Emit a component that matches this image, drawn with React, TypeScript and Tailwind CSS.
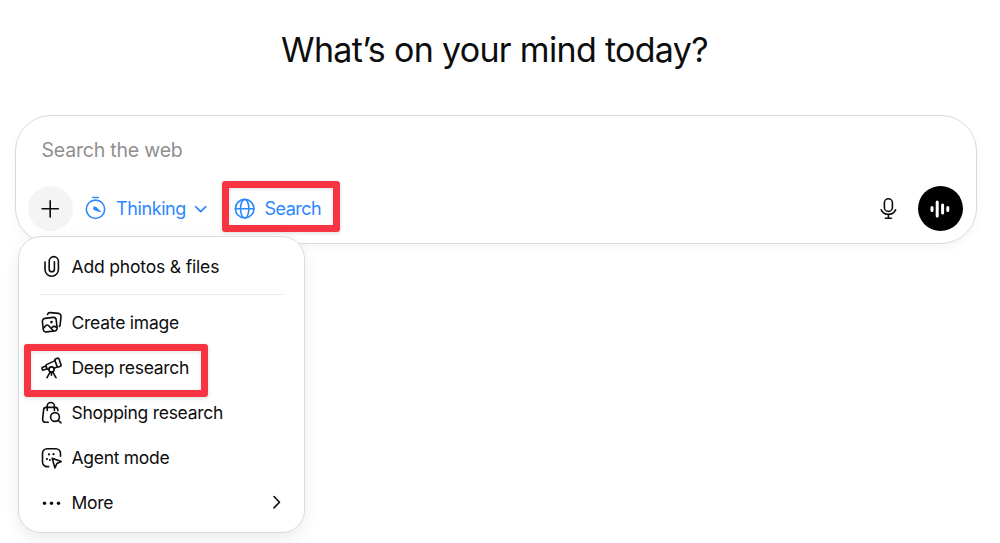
import { ReactNode } from 'react'

interface IconProps {
  children: ReactNode
  className?: string
}

function Icon({ children, className = '' }: IconProps) {
  return (
    <svg
      viewBox="0 0 24 24"
      width="24"
      height="24"
      fill="none"
      stroke="currentColor"
      strokeWidth="1.6"
      strokeLinecap="round"
      strokeLinejoin="round"
      className={`shrink-0 overflow-visible ${className}`}
    >
      {children}
    </svg>
  )
}

interface MenuItemProps {
  icon: ReactNode
  label: string
  labelClass: string
  submenu?: boolean
  highlighted?: boolean
}

function Highlight({ className }: { className: string }) {
  return (
    <span
      className={`pointer-events-none absolute rounded-[3px] border-7 border-[#f73442] shadow-[0_1px_4px_rgba(0,0,0,0.14),inset_0_1px_4px_rgba(0,0,0,0.12)] ${className}`}
    />
  )
}

function MenuItem({ icon, label, labelClass, submenu, highlighted }: MenuItemProps) {
  return (
    <button className="relative flex h-[45px] w-full items-center pr-4 pl-5 text-left">
      <Icon className="mb-[2px] ml-px">{icon}</Icon>
      <span className={`ml-2 flex-1 text-[17.5px] whitespace-nowrap ${labelClass}`}>{label}</span>
      {submenu && (
        <Icon className="mb-[3px]">
          <path d="M10 6.500l5.500 5.700-5.500 5.700" />
        </Icon>
      )}
      {highlighted && <Highlight className="top-[-2px] left-[5px] h-[53px] w-[184px]" />}
    </button>
  )
}

function AttachMenu() {
  return (
    <div className="absolute top-[120px] left-[2px] w-[287px] rounded-[23px] border border-[#dcdcdc] bg-white pt-2 pb-[6px] shadow-[0_6px_16px_rgba(0,0,0,0.08)]">
      <MenuItem
        label="Add photos & files"
        labelClass="tracking-[-0.17px]"
        icon={
          <path d="M5 7v7.500a6.700 6.700 0 0 0 13.400 0V6.200a4.600 4.600 0 0 0-9.200 0v8a2.600 2.600 0 0 0 5.200 0V6.800" />
        }
      />
      <div className="mx-5 mt-[4px] mb-[6px] h-px bg-[#ececec]" />
      <MenuItem
        label="Create image"
        labelClass="tracking-[-0.23px]"
        icon={
          <>
            <path d="M4.900 7.400l8.200-1a2.800 2.800 0 0 1 3.100 2.400l.9 8.100a2.800 2.800 0 0 1-2.500 3.100l-8.200.9a2.800 2.800 0 0 1-3.100-2.400L2.400 10.500a2.800 2.800 0 0 1 2.500-3.100z" />
            <path d="M7.500 3.500a2.700 2.700 0 0 1 2.800-1.900l8.200.8a2.800 2.800 0 0 1 2.500 3.100l-.8 8a3 3 0 0 1-.9 2" />
            <path d="M3.500 17.200l2.400-2.700a1.700 1.700 0 0 1 2.500 0l5 5.300M12.200 16.300c1-1.300 2.800-1.300 4.200.1" />
            <circle cx="11.500" cy="11.100" r="1.300" fill="currentColor" stroke="none" />
          </>
        }
      />
      <MenuItem
        label="Deep research"
        labelClass="tracking-[-0.28px]"
        highlighted
        icon={
          <>
            <path d="M15.400 3.100l2.200-.9a1 1 0 0 1 1.300.6l2.200 6.100a1 1 0 0 1-.6 1.300l-2.100.8a1 1 0 0 1-1.300-.6l-2.300-6a1 1 0 0 1 .6-1.300z" />
            <path d="M15 4.600L6.500 8.600a1 1 0 0 0-.5 1.300l1 2.700a1 1 0 0 0 1.300.6l1-.3M14 12.200l3.200-1.200M6 9.900l-3.400 1.400a1 1 0 0 0-.6 1.300l.3.900a1 1 0 0 0 1.300.6l3.400-1.400" />
            <circle cx="11.500" cy="13.500" r="2.600" />
            <path d="M10.300 15.900l-3.300 5.800M12.700 15.900l3.300 5.800M11.500 16.200v3" />
          </>
        }
      />
      <MenuItem
        label="Shopping research"
        labelClass="tracking-[-0.28px]"
        icon={
          <>
            <path d="M8.300 21.300H5.400a2.800 2.800 0 0 1-2.800-3.100l1-9.400A2.600 2.600 0 0 1 6.200 6.400h9A2.600 2.600 0 0 1 17.800 8.700l.1.900" />
            <path d="M7.200 9.400V5.100a3.600 3.600 0 0 1 7.200 0v4.300" />
            <circle cx="15" cy="16" r="4.400" />
            <path d="M18.200 19.300l2.800 2.500" />
          </>
        }
      />
      <MenuItem
        label="Agent mode"
        labelClass="tracking-[-0.28px]"
        icon={
          <>
            <path d="M8.700 20.600H7.300a4.600 4.600 0 0 1-4.800-4.600V7.300A4.600 4.600 0 0 1 7.100 2.700h8.800A4.600 4.600 0 0 1 20.500 7.300v3" />
            <path d="M12.200 12.200l9 3.300-4.300 2-2 4.400z" />
            <g fill="currentColor" stroke="none">
              <circle cx="9" cy="8.400" r="1.100" />
              <circle cx="13.500" cy="8.200" r="1.100" />
              <circle cx="7" cy="13" r="1.100" />
              <circle cx="9.900" cy="14" r="1" />
            </g>
          </>
        }
      />
      <MenuItem
        label="More"
        labelClass="tracking-[-0.25px]"
        submenu
        icon={
          <g fill="currentColor" stroke="none">
            <circle cx="4.500" cy="12.300" r="1.700" />
            <circle cx="11.500" cy="12.300" r="1.700" />
            <circle cx="18.500" cy="12.300" r="1.700" />
          </g>
        }
      />
    </div>
  )
}

function Composer() {
  return (
    <div className="relative mx-auto h-[129px] w-[962px] rounded-[36px] border border-[#dadada] bg-white shadow-[0_4px_10px_rgba(0,0,0,0.04)]">
      <div className="flex h-[70px] items-center pl-[26px] text-[19.5px] text-[#8f8f8f]">
        <span className="tracking-[-0.2px] whitespace-nowrap">Search the web</span>
      </div>
      <div className="flex h-[45px] items-center pr-[13px] pl-3">
        <button className="flex size-[45px] items-center justify-center rounded-full bg-[#f4f4f4]">
          <Icon>
            <path d="M12.200 3.700v16.200M4.100 11.800h16.200" />
          </Icon>
        </button>
        <button className="ml-[10px] flex items-center text-[18px] text-[#2b87ff]">
          <Icon>
            <circle cx="12.500" cy="12.300" r="9.200" />
            <path d="M9.800 .500h5.400" />
            <path
              d="M10.500 10c-.9.900-.5 2.700.9 3.200l6 2.100c.6.200.8-.5.400-.8l-4.500-4.400c-.8-.8-2-.9-2.800-.1z"
              fill="currentColor"
              stroke="none"
            />
          </Icon>
          <span className="ml-[7px] w-[75px] tracking-[-0.4px] whitespace-nowrap">Thinking</span>
          <Icon>
            <path d="M6.700 9.600l5 5 5-5" />
          </Icon>
        </button>
        <button className="relative ml-5 flex items-center text-[18px] text-[#2b87ff]">
          <Icon>
            <circle cx="11.700" cy="11.700" r="9.300" />
            <ellipse cx="11.700" cy="11.700" rx="4.200" ry="9.300" />
            <path d="M2.400 11.700h18.600" />
          </Icon>
          <span className="ml-2 tracking-[-0.5px] whitespace-nowrap">Search</span>
          <Highlight className="top-[-14px] left-[-11px] h-[51px] w-[118px]" />
        </button>
        <div className="ml-auto flex items-center gap-[18px]">
          <Icon>
            <rect x="8.400" y="1.800" width="8" height="12.600" rx="4" />
            <path d="M5.200 12.800c1.400 3 4.100 4.500 7.200 4.500s5.800-1.500 7.200-4.500M12.400 17.300v3.900M9.400 21.200h6" />
          </Icon>
          <button className="flex size-[45px] items-center justify-center rounded-full bg-black text-white">
            <Icon>
              <g strokeWidth="3">
                <path d="M4 10.500v3M9.200 5v14M14.600 8v8M19.800 10.500v3" />
              </g>
            </Icon>
          </button>
        </div>
      </div>
      <AttachMenu />
    </div>
  )
}

export default function App() {
  return (
    <main className="h-[543px] w-[1000px] overflow-hidden bg-white font-['Inter',sans-serif] text-[#0d0d0d]">
      <div className="w-[991px]">
        <h1 className="flex h-[115px] items-start justify-center pt-[25px] pr-[2px] text-[34px] leading-[50px] tracking-[-0.68px] whitespace-nowrap">
          What’s on your mind today?
        </h1>
        <Composer />
      </div>
    </main>
  )
}
